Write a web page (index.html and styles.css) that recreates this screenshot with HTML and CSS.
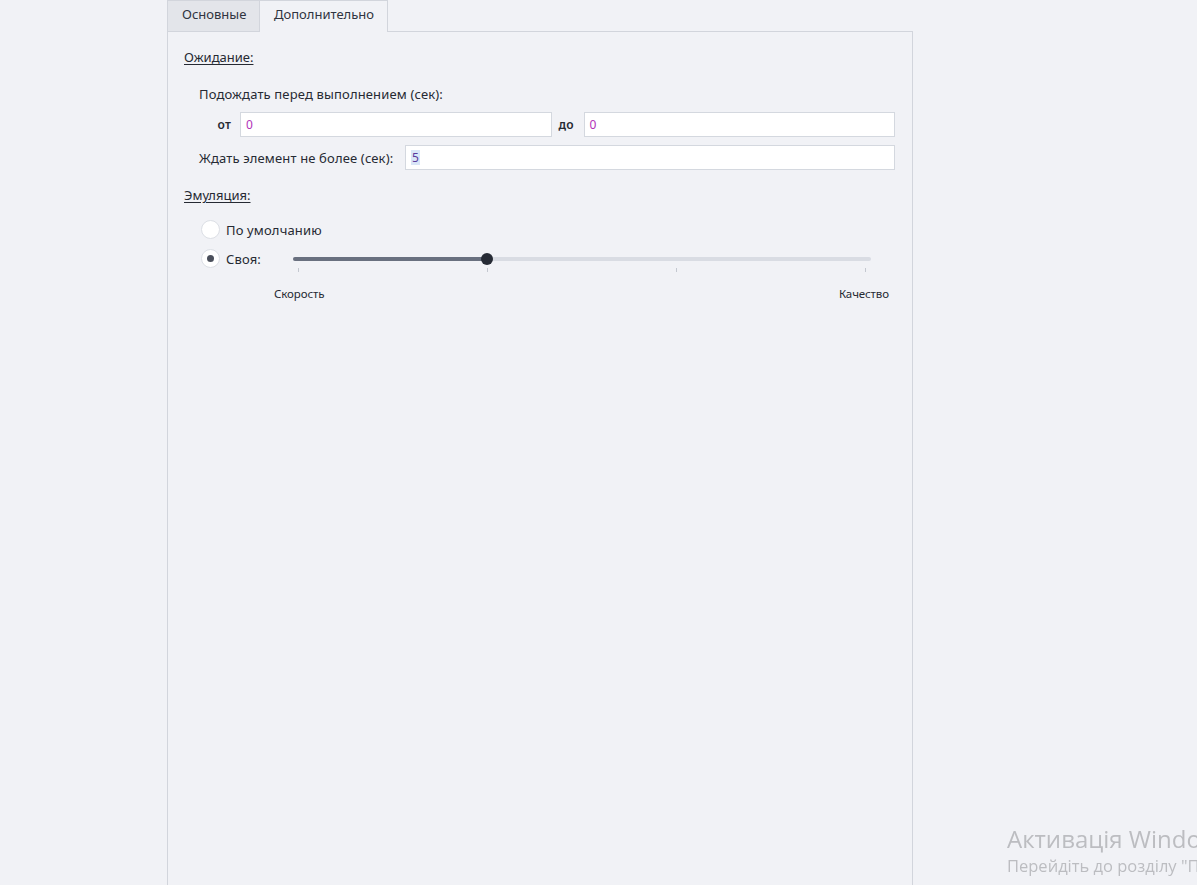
FILE: index.html
```html
<!DOCTYPE html>
<html lang="ru">
<head>
<meta charset="utf-8">
<title>Дополнительно</title>
<link rel="stylesheet" href="styles.css">
</head>
<body>
<div class="page">
  <div class="dialog">
    <div class="tabs">
      <div class="tab">Основные</div>
      <div class="tab active">Дополнительно</div>
    </div>
    <div class="panel">
      <div class="section-title">Ожидание:</div>
      <div class="group">
        <div class="caption">Подождать перед выполнением (сек):</div>
        <div class="range-row">
          <span class="lbl lbl-from">от</span>
          <div class="field"><span class="val">0</span></div>
          <span class="lbl lbl-to">до</span>
          <div class="field"><span class="val">0</span></div>
        </div>
        <div class="wait-row">
          <span class="lbl">Ждать элемент не более (сек):</span>
          <div class="field"><span class="val sel">5</span></div>
        </div>
      </div>

      <div class="section-title second">Эмуляция:</div>
      <div class="emu">
        <div class="radio-row">
          <span class="radio"></span>
          <span class="rlabel">По умолчанию</span>
        </div>
        <div class="radio-row">
          <span class="radio checked"></span>
          <span class="rlabel own">Своя:</span>
          <div class="slider">
            <div class="track">
              <div class="fill" style="width:33.6%"></div>
              <div class="thumb" style="left:33.6%"></div>
            </div>
            <div class="ticks">
              <span></span><span></span><span></span><span></span>
            </div>
          </div>
        </div>
        <div class="scale-labels">
          <span>Скорость</span>
          <span>Качество</span>
        </div>
      </div>
    </div>
  </div>
</div>
<div class="activation">
  <div class="act-title">Активація Windows</div>
  <div class="act-sub">Перейдіть до розділу "Параметри", щоб активувати Windows.</div>
</div>
</body>
</html>
```

FILE: styles.css
```css
html, body {
  margin: 0;
  padding: 0;
  height: 100%;
  overflow: hidden;
}

body {
  background: #f1f2f6;
  font-family: "Noto Sans", "Liberation Sans", sans-serif;
  font-size: 13px;
  letter-spacing: 0.15px;
  color: #262a33;
}

.page {
  display: flex;
  height: 100%;
  padding-left: 167px;
}

.dialog {
  display: flex;
  flex-direction: column;
  width: 746px;
  height: 920px;
}

/* tab strip */
.tabs {
  display: flex;
  height: 31px;
  flex: none;
}

.tab {
  box-sizing: border-box;
  height: 31px;
  padding: 0 14px 4px;
  display: flex;
  align-items: center;
  background: #e3e5ea;
  border: 1px solid #d2d5dc;
  border-bottom: none;
  color: #2f3440;
  font-size: 13px;
  letter-spacing: 0;
}

.tab:first-child {
  width: 92px;
  border-right: none;
}

.tab.active {
  width: 129px;
  background: #f1f2f6;
  position: relative;
  z-index: 1;
  margin-bottom: -1px;
  height: 32px;
  padding-bottom: 5px;
}

/* content panel */
.panel {
  flex: 1;
  box-sizing: border-box;
  border: 1px solid #d2d5dc;
  padding: 16px 17px 0 16px;
}

.section-title {
  text-decoration: underline;
  text-underline-offset: 2px;
  line-height: 18px;
  letter-spacing: 0;
}

.section-title.second {
  margin-top: 16px;
}

.group {
  padding-left: 15px;
  padding-top: 19px;
}

.caption {
  line-height: 18px;
  margin-bottom: 9px;
}

.range-row,
.wait-row {
  display: flex;
  align-items: center;
}

.range-row {
  margin-bottom: 8px;
}

.lbl {
  white-space: nowrap;
}

.lbl-from {
  width: 41px;
  text-align: right;
  padding-right: 9px;
  box-sizing: border-box;
  flex: none;
  font-weight: 600;
  font-size: 12px;
}

.lbl-to {
  width: 32px;
  padding-left: 7px;
  box-sizing: border-box;
  flex: none;
  font-weight: 600;
  font-size: 12px;
}

.wait-row .lbl {
  width: 206px;
  flex: none;
}

.field {
  flex: 1;
  box-sizing: border-box;
  height: 25px;
  background: #ffffff;
  border: 1px solid #d4d8df;
  display: flex;
  align-items: center;
  padding-left: 5px;
}

.val {
  color: #b232b8;
  font-size: 12px;
  line-height: 15px;
}

.val.sel {
  background: #d9e6f7;
  color: #5a3a9c;
  padding: 0 1px;
}

/* emulation block */
.emu {
  padding-left: 17px;
  padding-top: 16px;
}

.radio-row {
  display: flex;
  align-items: center;
  height: 19px;
  margin-bottom: 10px;
}

.radio {
  box-sizing: border-box;
  width: 19px;
  height: 19px;
  border-radius: 50%;
  background: #ffffff;
  border: 1px solid #dcdfe5;
  flex: none;
  display: flex;
  align-items: center;
  justify-content: center;
}

.radio.checked::after {
  content: "";
  width: 7px;
  height: 7px;
  border-radius: 50%;
  background: #4a4f5b;
}

.rlabel {
  margin-left: 6px;
  white-space: nowrap;
}

.rlabel.own {
  width: 67px;
  flex: none;
}

.slider {
  flex: none;
  width: 578px;
  position: relative;
  height: 19px;
}

.track {
  position: absolute;
  left: 0;
  right: 0;
  top: 8px;
  height: 4px;
  border-radius: 2px;
  background: #d9dce3;
}

.fill {
  position: absolute;
  left: 0;
  top: 0;
  bottom: 0;
  border-radius: 2px;
  background: #69707f;
}

.thumb {
  position: absolute;
  top: -4px;
  width: 12px;
  height: 12px;
  margin-left: -6px;
  border-radius: 50%;
  background: #262b35;
}

.ticks {
  position: absolute;
  left: 5px;
  right: 5px;
  top: 19px;
  display: flex;
  justify-content: space-between;
}

.ticks span {
  width: 1px;
  height: 4px;
  background: #c4c8d0;
}

.scale-labels {
  display: flex;
  justify-content: space-between;
  width: 615px;
  margin-left: 73px;
  margin-top: 18px;
  font-size: 11.5px;
  letter-spacing: -0.1px;
}

/* system overlay in the corner */
.activation {
  position: fixed;
  left: 1007px;
  top: 823px;
  white-space: nowrap;
  color: #bcbdc1;
  font-family: "Open Sans", "Noto Sans", sans-serif;
  letter-spacing: 0;
}

.act-title {
  font-size: 24px;
  line-height: 32px;
}

.act-sub {
  font-size: 16.5px;
  line-height: 20px;
  margin-top: 1px;
}
```
